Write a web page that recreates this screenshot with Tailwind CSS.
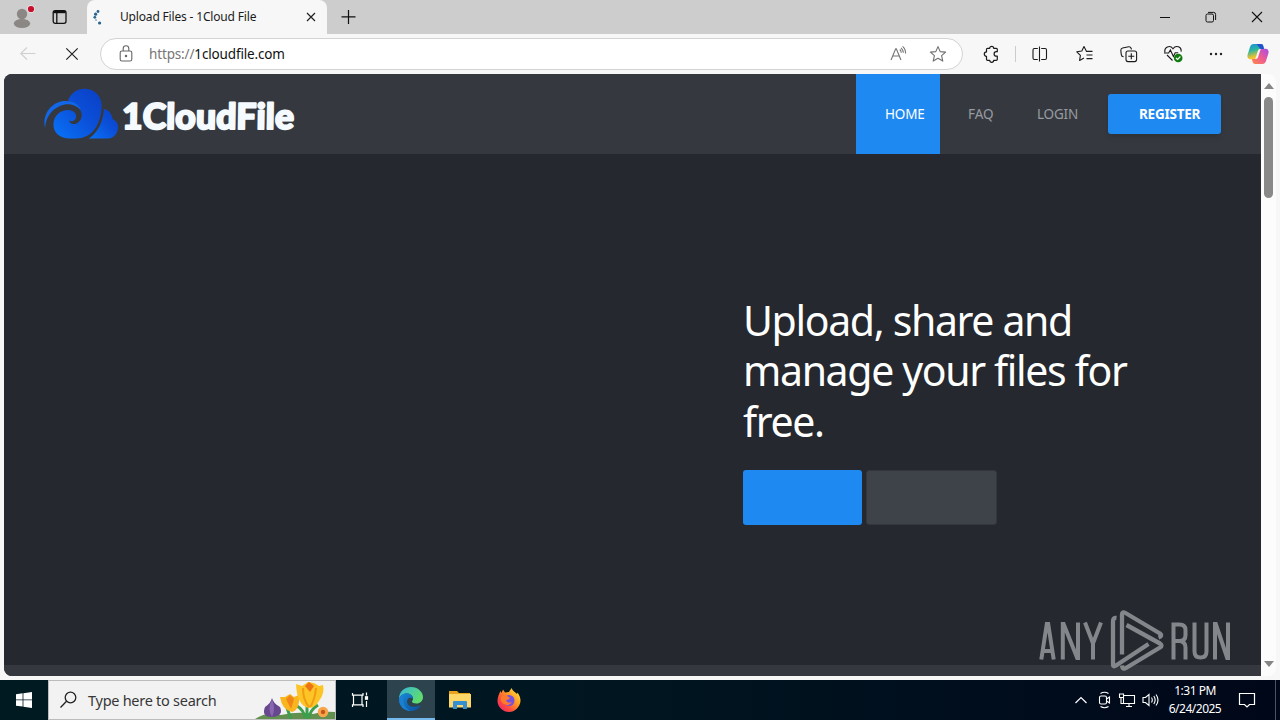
<!DOCTYPE html>
<html lang="en">

<head>
    <meta charset="UTF-8" />
    <title>Upload Files - 1Cloud File</title>
    <script src="https://cdn.jsdelivr.net/npm/@tailwindcss/browser@4"></script>
</head>

<body class="w-[1280px] h-[720px] overflow-hidden flex flex-col bg-[#f7f7f7] font-['Noto_Sans','Open_Sans',sans-serif]">

    <!-- Tab strip -->
    <div class="h-[34px] shrink-0 bg-[#cdcdcd] flex">
        <div class="w-[87px] flex items-center pl-2.5 gap-4">
            <svg class="w-[26px] h-[26px]" viewBox="0 0 26 26">
                <circle cx="12" cy="10" r="5.2" fill="#8b8784" />
                <ellipse cx="12" cy="19.5" rx="8.2" ry="4.6" fill="#8b8784" />
                <circle cx="21" cy="5" r="4" fill="#e4dcdc" />
                <circle cx="21" cy="5" r="3.1" fill="#c8102e" />
            </svg>
            <svg class="w-4 h-4" viewBox="0 0 16 16" fill="none" stroke="#111" stroke-width="1.3">
                <rect x="1.2" y="1.7" width="12.8" height="12.6" rx="2" />
                <path d="M4.8 3.5v10.8" />
                <path d="M1.5 3h12" stroke-width="2.4" />
            </svg>
        </div>
        <div class="w-[240px] bg-[#f7f7f7] rounded-t-lg flex items-center pl-1.5 pr-2.5">
            <svg class="w-[14px] h-[16px]" viewBox="0 0 14 16" fill="#2b638c">
                <circle cx="5" cy="2.5" r="1.4" />
                <circle cx="2.6" cy="5.2" r="1.6" />
                <circle cx="1.8" cy="8.3" r="1.4" />
                <circle cx="3" cy="11" r="1" fill="#8fb0c8" />
                <circle cx="6.6" cy="14" r="1.6" />
            </svg>
            <span class="ml-[13px] text-[12px] tracking-[-0.17px] text-[#1b1b1b] whitespace-nowrap">Upload Files - 1Cloud File</span>
            <svg class="w-3 h-3 ml-auto" viewBox="0 0 12 12" fill="none" stroke="#222" stroke-width="1.2">
                <path d="M2 2l8 8M10 2l-8 8" />
            </svg>
        </div>
        <svg class="w-4 h-4 mt-[9px] ml-[13px]" viewBox="0 0 16 16" fill="none" stroke="#111" stroke-width="1.2">
            <path d="M8.5 1v14M1.5 7.8h14" />
        </svg>
        <div class="ml-auto flex items-center gap-[34px] pr-[17px]">
            <svg class="w-3 h-3" viewBox="0 0 12 12" stroke="#111"><path d="M1 6.5h10" /></svg>
            <svg class="w-3 h-3" viewBox="0 0 12 12" fill="none" stroke="#111">
                <rect x="1" y="3" width="7.5" height="8" rx="1.5" />
                <path d="M3 1.4h5.6a2 2 0 0 1 2 2V9" />
            </svg>
            <svg class="w-3 h-3" viewBox="0 0 12 12" stroke="#111" stroke-width="1.1"><path d="M1 1l10 10M11 1L1 11" /></svg>
        </div>
    </div>

    <!-- Toolbar -->
    <div class="h-10 shrink-0 flex items-center">
        <svg class="w-4 h-4 ml-5" viewBox="0 0 16 16" fill="none" stroke="#cfcfcf" stroke-width="1.1">
            <path d="M15.5 7.5H1M7 1.5l-6.3 6 6.3 6" />
        </svg>
        <svg class="w-4 h-4 ml-7" viewBox="0 0 16 16" stroke="#222" stroke-width="1.2">
            <path d="M2.3 2.3l11.4 11.4M13.7 2.3L2.3 13.7" />
        </svg>
        <div class="ml-5 w-[863px] h-8 rounded-full border border-[#d3d3d3] bg-white flex items-center pl-[18px] pr-[15px]">
            <svg class="w-[14px] h-[18px]" viewBox="0 0 14 18" fill="none" stroke="#666" stroke-width="1.1">
                <rect x="1.2" y="6" width="11.6" height="10" rx="1.8" />
                <path d="M4.2 6V3.6a2.8 2.8 0 0 1 5.6 0V6" />
                <circle cx="7" cy="11" r=".7" fill="#666" />
            </svg>
            <span class="ml-4 text-[13.5px] tracking-[-0.15px] text-[#111] whitespace-nowrap"><span class="text-[#767676]">https://</span>1cloudfile.com</span>
            <svg class="w-[17px] h-4 ml-auto" viewBox="0 0 17 16" fill="none" stroke="#757575" stroke-width="1.1">
                <path d="M1 14L5.7 2.7h.6L11 14M2.8 10h6.4" />
                <path d="M9.8 3.5q1.4 1.4 1.5 3.3M11 1.8q2.3 2 2.4 5M12.6.4q3 2.6 3 7.2" />
            </svg>
            <svg class="w-[18px] h-[18px] ml-[22px]" viewBox="0 0 18 18" fill="none" stroke="#707070" stroke-width="1.1" stroke-linejoin="round">
                <path d="M9 1.6l2.2 5 5.4.5-4 3.6 1.2 5.4L9 13.3l-4.8 2.8 1.2-5.4-4-3.6 5.4-.5z" />
            </svg>
        </div>
        <svg class="w-[18px] h-[18px] ml-5" viewBox="0 0 18 18" fill="none" stroke="#1b1b1b" stroke-width="1.2" stroke-linejoin="round">
            <path d="M4.5 3.3h2.2a2 2 0 1 1 4 0h2.6q1 0 1 1v2.4h-1a2.2 2.2 0 0 0 0 4.4h1v3.2q0 1-1 1h-2.6a2 2 0 0 1-4 0H4.5q-1 0-1-1v-3a2.2 2.2 0 0 1 0-4.4V4.3q0-1 1-1z" />
        </svg>
        <div class="w-px h-4 bg-[#cccccc] ml-3.5"></div>
        <svg class="w-4 h-4 ml-4" viewBox="0 0 16 16" fill="none" stroke="#1b1b1b" stroke-width="1.1">
            <path d="M5.8 2.5H2.4Q1 2.5 1 4v8q0 1.5 1.4 1.5h3.4M9.2 2.5h3.9Q14.5 2.5 14.5 4v8q0 1.5-1.4 1.5H9.2M7.5.5v15" />
        </svg>
        <svg class="w-[18px] h-[18px] ml-7" viewBox="0 0 18 18" fill="none" stroke="#1b1b1b" stroke-width="1.1" stroke-linejoin="round">
            <path d="M16.5 6.4h-6L8 1.5 5.8 6 .8 6.8l3.6 3.6-.8 5L8 13.1M10.5 10h6M10.5 13.6h6" />
        </svg>
        <svg class="w-[18px] h-[18px] ml-[26px]" viewBox="0 0 18 18" fill="none" stroke="#1b1b1b" stroke-width="1.1">
            <path d="M3.6 11.8Q1.6 11.6 1.3 9.6L.8 5.4Q.8 3.4 2.6 3l6-1.3q2-.2 2.6 1.8l.2 1" />
            <rect x="6" y="6" width="10.6" height="10.6" rx="2" />
            <path d="M11.3 8.3v6M8.3 11.3h6" />
        </svg>
        <svg class="w-5 h-[18px] ml-[26px]" viewBox="0 0 20 18" fill="none" stroke="#1b1b1b" stroke-width="1.1">
            <path d="M1 7.5C-.3 2 6-.5 9 3.7c3-4.2 9-1.7 8 3M3 10l5.5 5.5" />
            <path d="M0 8h4.6L6.4 5l3 6.5 1.8-3.8h3" />
            <circle cx="14.2" cy="13" r="4.3" fill="#107c10" stroke="none" />
            <path d="M12 13l1.6 1.5 2.8-3" stroke="#fff" />
        </svg>
        <svg class="w-4 h-4 ml-6" viewBox="0 0 16 16" fill="#222">
            <circle cx="3" cy="8" r="1.2" /><circle cx="8" cy="8" r="1.2" /><circle cx="13" cy="8" r="1.2" />
        </svg>
        <svg class="w-[22px] h-[22px] ml-[23px]" viewBox="0 0 22 22">
            <defs>
                <linearGradient id="cpA" x1="0" y1="0" x2=".3" y2="1">
                    <stop offset="0" stop-color="#1690dd" /><stop offset=".45" stop-color="#2bb5a0" /><stop offset=".9" stop-color="#f2c32d" />
                </linearGradient>
                <linearGradient id="cpB" x1="1" y1="0" x2="0" y2="1">
                    <stop offset="0" stop-color="#a44ee8" /><stop offset=".5" stop-color="#ee5b94" /><stop offset="1" stop-color="#ff8a45" />
                </linearGradient>
            </defs>
            <path d="M6.6 1h7.3c1.4 0 2 .8 2.5 2.4L17 6h-3.5c-1.7 0-2.3.8-2.8 2.5L9 14c-.5 1.6-1 2.2-2.3 2.2H3.3C1.3 16.2 0 14.6.5 12L3 4c.7-2 1.8-3 3.6-3z" fill="url(#cpA)" />
            <path d="M15.4 21H8c-1.4 0-2-.8-2.5-2.4L4.9 16h3.6c1.7 0 2.3-.8 2.8-2.5L13 8c.5-1.6 1-2.2 2.3-2.2h3.4c2 0 3.3 1.6 2.8 4.2L19 18c-.7 2-1.8 3-3.6 3z" fill="url(#cpB)" />
            <path d="M9.5 1H14c1.4 0 2 .8 2.4 2.4L17 6h-3.5z" fill="#2350cf" />
        </svg>
    </div>

    <!-- Page -->
    <div class="h-[602px] shrink-0 mx-1 flex rounded-lg overflow-hidden bg-[#fcfcfc]">
        <div class="w-[1257px] flex flex-col bg-[#25282e]">
            <header class="h-20 shrink-0 bg-[#35393f] flex pl-10 pr-10">
                <svg class="w-[260px] h-[60px] mt-3.5" viewBox="0 0 260 60">
                    <defs>
                        <linearGradient id="cloud" x1="1" y1="0" x2="0" y2="1">
                            <stop offset="0" stop-color="#0a3fc4" /><stop offset=".45" stop-color="#0b4fd8" /><stop offset="1" stop-color="#0874f8" />
                        </linearGradient>
                    </defs>
                    <path d="M24 13C27 4 35 0 43 1c10 1.300 16 10 14.500 20C56 35 50 50 32 50.500H25C14 50 9 43 9.500 35.500 10 27 17 22 24 22c6 0 9 4 8 8-1 3-4 4-7 2.500 1 4 6 4.500 9 2 4-3 5-8 2-13C33 16 28 14 24 13z" fill="url(#cloud)" />
                    <path d="M1 40C-2 27 7 14 20 13c8-.6 14 2 17 9-6-6-14-7-21-4C7 22 2 29 1 40z" fill="#1267e8" />
                    <path d="M60 21c5 1 8 5 8.500 10 4 2 6 5 5.500 9-.6 6-4 10-10 10.500H45C54 44 59 34 60 21z" fill="url(#cloud)" />
                    <text transform="skewX(-1)" x="78.500" y="41" textLength="172" lengthAdjust="spacingAndGlyphs" font-family="Lato" font-weight="900" font-size="35.500" fill="#f5faff" stroke="#f5faff" stroke-width="2" stroke-linejoin="round">1CloudFile</text>
                </svg>
                <nav class="ml-auto flex text-[13.5px] text-[#989ba0]">
                    <a class="w-[84px] bg-[#1f89f2] text-white flex items-center pl-[29px] tracking-[-0.15px]">HOME</a>
                    <a class="w-[69px] flex items-center pl-7 tracking-[-0.1px]">FAQ</a>
                    <a class="w-[99px] flex items-center pl-7 tracking-[-0.2px]">LOGIN</a>
                    <a class="w-[113px] h-10 mt-5 rounded-[3px] bg-[#1f89f2] text-white font-bold shadow-md flex items-center pl-[31px] tracking-[-0.25px]">REGISTER</a>
                </nav>
            </header>
            <main class="h-[511px] shrink-0 pl-[739px] pt-[141px] relative">
                <h1 class="text-[41px] leading-[50.4px] tracking-[-1.35px] text-white whitespace-nowrap">Upload, share and<br />manage your files for<br />free.</h1>
                <div class="flex gap-1 mt-6">
                    <button class="w-[119px] h-[55px] rounded-[3px] bg-[#1f89f2]"></button>
                    <button class="w-[131px] h-[55px] rounded-[3px] bg-[#3e4249] border border-[#33373d]"></button>
                </div>
                <!-- Watermark -->
                <svg class="absolute left-[1030px] top-[450px] w-[204px] h-[72px] z-10" viewBox="0 0 204 72">
                    <g fill="none" stroke="#94969a" stroke-opacity=".85" stroke-width="4">
                        <path d="M7.300 55.500L12.800 20h1.400L19.700 55.500M9 47h9" />
                        <path d="M28.800 55.500V20h.8L43.200 54h.8V18.500" />
                        <path d="M51 18.500l8 21 8-21M59 39v16.500" />
                        <path d="M139.500 55.500V20.500h6q6 0 6 5.500v5q0 6-6 6H141M146 37q5.500 1 5.500 6.500v12" />
                        <path d="M160.500 18.500v29q0 6 6 6t6-6v-29" />
                        <path d="M181 55.500V20h.8L193.200 54h.8V18.500" />
                    </g>
                    <g fill="none" stroke="#94969a" stroke-opacity=".85" stroke-width="4.300" stroke-linejoin="round">
                        <path d="M82.500 14q-3.500-.5-3.500 3.500v43q0 3 3 1L114.500 40" />
                        <path d="M88 50.500V10.500q0-3.500 3.500-1.500L126 29.500q3 2.500-1.500 4" />
                        <path d="M92.500 21L126 39.500q3 2 0 4L92 64q-3.500 2-4-2.500" />
                    </g>
                </svg>
            </main>
            <div class="h-[11px] bg-[#35393f]"></div>
        </div>
        <div class="w-[15px] flex flex-col items-center pt-[9px] pb-[9px]">
            <svg class="w-2.5 h-1.5" viewBox="0 0 10 6" fill="#858585"><path d="M5 0l5 6H0z" /></svg>
            <div class="w-[9px] h-[101px] rounded-full bg-[#898989] mt-2"></div>
            <svg class="w-2.5 h-1.5 mt-auto" viewBox="0 0 10 6" fill="#858585"><path d="M0 0h10L5 6z" /></svg>
        </div>
    </div>

    <!-- Taskbar -->
    <div class="h-10 shrink-0 mt-1 flex items-center bg-gradient-to-r from-[#001a22] via-[#001520] to-[#000719] text-white">
        <div class="w-12 flex justify-center">
            <svg class="w-4 h-4" viewBox="0 0 16 16" fill="#fff">
                <path d="M0 2.200L6.600 1.300v6.200H0zM7.400 1.200L16 0v7.500H7.400zM0 8.300h6.600v6.300L0 13.700zM7.400 8.300H16V16l-8.600-1.200z" />
            </svg>
        </div>
        <div class="w-[288px] h-10 bg-[#f2f2f2] border border-[#bcbcbc] flex items-center pl-2.5">
            <svg class="w-[18px] h-[18px]" viewBox="0 0 18 18" fill="none" stroke="#222" stroke-width="1.300">
                <circle cx="11.500" cy="6.500" r="5.300" /><path d="M7.500 10.300L1.500 16.500" />
            </svg>
            <span class="ml-[11px] pt-px text-[14.5px] text-[#373737] tracking-[-0.27px] whitespace-nowrap">Type here to search</span>
            <svg class="w-[80px] h-[38px] ml-auto" viewBox="0 0 80 38">
                <path d="M0 38Q12 30 26 34 44 30 58 33 68 30 80 31v7z" fill="#62904e" />
                <path d="M36 38l-4-11M52 38V24M54 37q1-8 9-13M50 37q-1-8-8-12" stroke="#3f9e4b" stroke-width="3" fill="none" />
                <path d="M17 17q1 5 8 9 4 9-8 10-11 0-7-10 6-4 7-9z" fill="#67478e" />
                <path d="M17 18q-5 10 0 18 4-8 0-18z" fill="#8a66b0" />
                <path d="M25 16l5 0 5-3 4 3 5-2q1 15-7 17-10-2-12-15z" fill="#f8b51d" />
                <path d="M31 18l4-4 4 4-3 10z" fill="#ef8617" />
                <path d="M41 3l6 2 6-4 6 1 5 3 4-1q2 8-4 16-4 7-10 7-12-2-13-24z" fill="#fcc424" />
                <path d="M48 7q0 12 6 19M61 7q-1 12-6 19" stroke="#f09c17" stroke-width="2" fill="none" />
                <path d="M50 5l4-4 5 4-4 6z" fill="#ed7414" />
                <circle cx="68" cy="31" r="5.300" fill="#f6a64b" /><circle cx="68" cy="31" r="2.200" fill="#c4551c" />
            </svg>
        </div>
        <div class="w-[51px] flex pl-[15px]">
            <svg class="w-[18px] h-[18px]" viewBox="0 0 18 18" fill="none" stroke="#fff" stroke-width="1.200">
                <path d="M1.500 2v2.200H12V2M1.500 16v-2.200H12V16M2.500 4.200v9.600M11 4.200v9.600M15.500 1.500v3M15.500 10v6" />
                <rect x="14.500" y="5.800" width="2" height="2.400" fill="#fff" />
            </svg>
        </div>
        <div class="w-12 h-10 bg-[#2d444e] border-b-2 border-[#76b9ed] flex items-center justify-center">
            <svg class="w-6 h-6" viewBox="0 0 24 24">
                <defs>
                    <linearGradient id="edgeTop" x1="0" y1="0" x2="1" y2=".5">
                        <stop offset="0" stop-color="#35b6df" /><stop offset="1" stop-color="#5fdc6c" />
                    </linearGradient>
                    <linearGradient id="edgeLow" x1="0" y1="0" x2="1" y2="1">
                        <stop offset="0" stop-color="#1688d8" /><stop offset="1" stop-color="#0d4fa0" />
                    </linearGradient>
                </defs>
                <path d="M0 12C0 4 6 0 12 0c7 0 12 5 12 10 0 4-3 6.500-6.500 6.500-3 0-4.500-1-4.500-2 0-.8 1-1 1-3C14 9 11 6.500 8 6.500 4 6.500 1 9 0 12z" fill="url(#edgeTop)" />
                <path d="M0 12c1-4 5-5.500 8-5.500 3 0 6 2 6 5-3-2-6 0-6 3 0 4 5 7.500 14 3.700C19 22.500 15.500 24 12 24 5 24 0 19 0 12z" fill="url(#edgeLow)" />
                <path d="M8 6.500c-5 2-5.500 14 4 17.500C5 24 0 19 0 12c1-4 5-5.500 8-5.500z" fill="#1b7fd2" />
            </svg>
        </div>
        <div class="w-[49px] flex justify-center">
            <svg class="w-[22px] h-[20px]" viewBox="0 0 22 20">
                <path d="M0 1h8l2 2h11v3H0z" fill="#e8a31c" />
                <path d="M0 4h22v13.500H0z" fill="#ffd668" />
                <path d="M4 19v-7q0-1 1-1h12q1 0 1 1v7h-4v-4H8v4z" fill="#368fd0" />
            </svg>
        </div>
        <div class="w-[49px] flex justify-center">
            <svg class="w-6 h-6" viewBox="0 0 24 24">
                <defs>
                    <linearGradient id="fox" x1="1" y1="0" x2="0" y2="1">
                        <stop offset="0" stop-color="#fff04d" /><stop offset=".4" stop-color="#ff9a22" /><stop offset=".7" stop-color="#ff4542" /><stop offset="1" stop-color="#e32079" />
                    </linearGradient>
                </defs>
                <path d="M12 4c1-2 2-3 2.500-4 1 3 4 4 5.500 6l.5-1.500C23 8 23.500 10 23.500 13 23 19 18 24 12 24S.5 19 .5 13C.5 9 2 6 3.500 3L4.500 5 6 1.500 8 4.500z" fill="url(#fox)" />
                <circle cx="12" cy="12.500" r="5.500" fill="#7650df" />
                <path d="M4 9q5-3 9 1-1 2-4 2 1 4 6 2-3 5-8 2-4-2-3-7z" fill="#ff7b2c" />
            </svg>
        </div>
        <div class="ml-auto flex items-center h-10">
            <svg class="w-3.5 h-2 mr-2.5" viewBox="0 0 14 8" fill="none" stroke="#fff" stroke-width="1.200"><path d="M1.500 7L7 1.500 12.500 7" /></svg>
            <svg class="w-3.5 h-[18px] mr-1.5" viewBox="0 0 14 18" fill="none" stroke="#fff" stroke-width="1.100">
                <rect x="1.500" y="5" width="7" height="8" rx="1.500" />
                <path d="M8.500 8l3-2v6l-3-2M2.500 2.500q4-2.500 8 0M2.500 15.500q4 2.500 8 0" />
            </svg>
            <svg class="w-[18px] h-4 mr-1.5" viewBox="0 0 18 16" fill="none" stroke="#fff" stroke-width="1.100">
                <path d="M6 3.500h10.500v8H5.500V6M8 14.500h6M11 11.500v3M3 6v5.500h2.500M1.500 2h4v3.500h-4z" />
            </svg>
            <svg class="w-[18px] h-4 mr-2" viewBox="0 0 18 16" fill="none" stroke="#fff" stroke-width="1.100">
                <path d="M1 5.500h2.500L7 2.500v11l-3.500-3H1zM9.500 5.500q1.600 2.500 0 5M11.800 4q2.700 4 0 8M14 2.500q4 5.500 0 11" />
            </svg>
            <div class="w-[54px] text-[12px] leading-[18px] text-center tracking-[-0.5px] whitespace-nowrap">1:31 PM<br />6/24/2025</div>
            <svg class="w-[18px] h-[18px] ml-4 mr-[19px]" viewBox="0 0 18 18" fill="none" stroke="#fff" stroke-width="1.200">
                <path d="M1.500 2.500h15v11h-5L9 16l-2.500-2.500h-5z" />
            </svg>
            <div class="w-px h-10 bg-[#4b5362] mr-1"></div>
        </div>
    </div>
</body>

</html>
